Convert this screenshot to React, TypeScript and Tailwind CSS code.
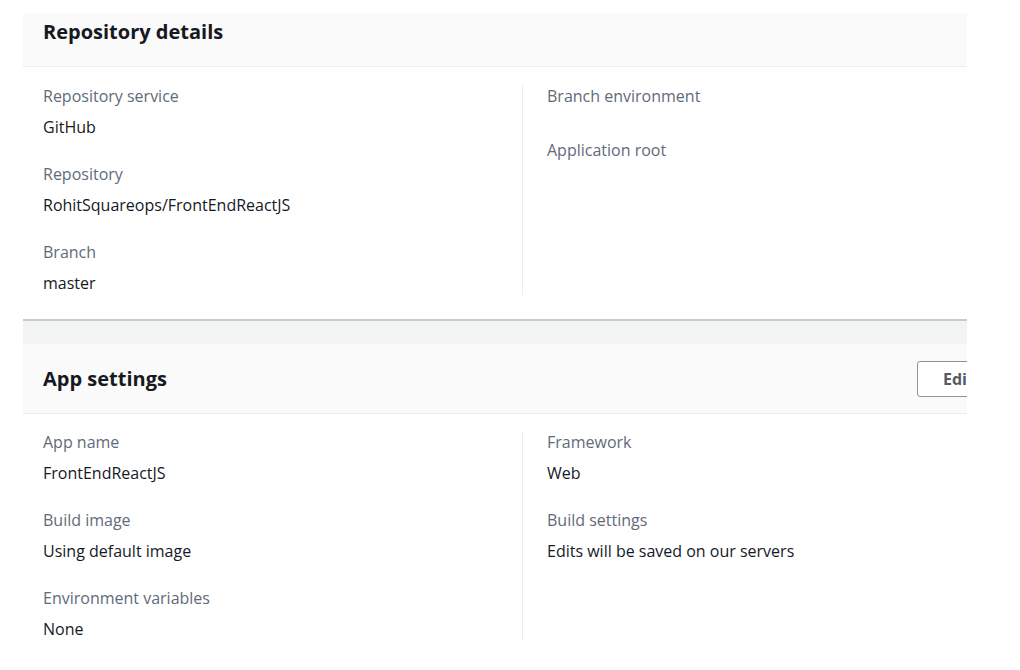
import React from "react";

type Item = { label: string; value?: string };

function Field({ label, value }: Item) {
  return (
    <div>
      <div className="text-[16px] leading-[22px] text-[#5f6b7a] mb-2">{label}</div>
      {value ? <div className="text-[16px] leading-[24px] text-[#16191f]">{value}</div> : null}
    </div>
  );
}

function Body({ left, right, pt, pb }: { left: Item[]; right: Item[]; pt: string; pb: string }) {
  return (
    <div className={`grid grid-cols-[479px_1fr] px-5 ${pt} ${pb} bg-white`}>
      <div className="flex flex-col gap-6">
        {left.map((i) => (
          <Field key={i.label} {...i} />
        ))}
      </div>
      <div className="flex flex-col gap-6 border-l border-[#eaeded] pl-6">
        {right.map((i) => (
          <Field key={i.label} {...i} />
        ))}
      </div>
    </div>
  );
}

export default function App() {
  return (
    <div
      className="w-[1020px] h-[670px] bg-white overflow-hidden"
      style={{ fontFamily: '"Open Sans", "Noto Sans", Arial, sans-serif' }}
    >
      <div className="ml-[23px] mt-[13px] w-[944px] overflow-hidden">
        <div className="h-[54px] bg-[#fafafa] border-b border-[#eaeded] px-5 pt-[4px]">
          <h2 className="text-[20px] leading-[30px] font-bold text-[#16191f]">Repository details</h2>
        </div>
        <Body
          pt="pt-[18px]"
          pb="pb-[24px]"
          left={[
            { label: "Repository service", value: "GitHub" },
            { label: "Repository", value: "RohitSquareops/FrontEndReactJS" },
            { label: "Branch", value: "master" },
          ]}
          right={[{ label: "Branch environment" }, { label: "Application root" }]}
        />
        <div className="h-[2px] bg-[#c6cbcb]" />
        <div className="h-[23px] bg-[#f2f3f3]" />
        <div className="h-[70px] bg-[#fafafa] border-b border-[#eaeded] pl-5 flex items-center justify-between">
          <h2 className="text-[20px] leading-[30px] font-bold text-[#16191f]">App settings</h2>
          <button className="w-[80px] h-[36px] shrink-0 -mr-[30px] border border-[#8d949c] rounded-[3px] bg-white text-left pl-[25px] text-[16px] font-bold text-[#545b64]">
            Edit
          </button>
        </div>
        <Body
          pt="pt-[17px]"
          pb="pb-[24px]"
          left={[
            { label: "App name", value: "FrontEndReactJS" },
            { label: "Build image", value: "Using default image" },
            { label: "Environment variables", value: "None" },
          ]}
          right={[
            { label: "Framework", value: "Web" },
            { label: "Build settings", value: "Edits will be saved on our servers" },
          ]}
        />
      </div>
    </div>
  );
}
